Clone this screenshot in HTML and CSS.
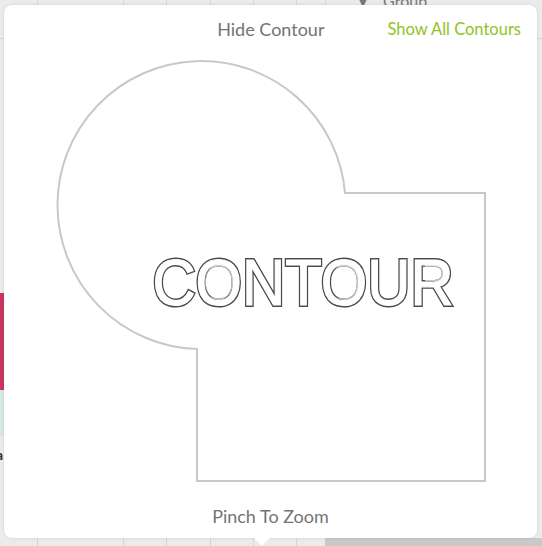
FILE: index.html
```html
<!DOCTYPE html>
<html>
<head>
<meta charset="utf-8">
<link rel="stylesheet" href="styles.css">
</head>
<body>
<div class="backdrop">
  <div class="bg-grid">
    <span class="bg-group">▼&nbsp;&nbsp;&nbsp;Group</span>
    <div class="bg-pink"></div>
    <div class="bg-teal"></div>
    <span class="bg-a">a</span>
    <div class="bg-dark"></div>
  </div>
  <div class="popover">
    <div class="header">
      <span class="hide">Hide Contour</span>
      <span class="show">Show All Contours</span>
    </div>
    <svg class="canvas" width="533" height="533" viewBox="4 5 533 533">
      <path class="shape" d="M345 193 L485 193 L485 481 L197 481 L197 349 A144 144 0 1 1 345 193 Z"/>
      <defs>
        <clipPath id="holes">
          <ellipse cx="219" cy="282" rx="14" ry="18"/>
          <ellipse cx="345" cy="282" rx="14" ry="18"/>
          <rect x="425" y="264" width="19" height="17"/>
        </clipPath>
      </defs>
      <g transform="translate(303 0) scale(0.92 1)">
        <text class="word outer" x="0" y="305" text-anchor="middle">CONTOUR</text>
        <text class="word inner" x="0" y="305" text-anchor="middle">CONTOUR</text>
      </g>
      <g clip-path="url(#holes)">
        <g transform="translate(303 0) scale(0.92 1)">
          <text class="word hole" x="0" y="305" text-anchor="middle">CONTOUR</text>
          <text class="word inner" x="0" y="305" text-anchor="middle">CONTOUR</text>
        </g>
      </g>
    </svg>
    <div class="footer">Pinch To Zoom</div>
    <div class="arrow"></div>
  </div>
</div>
</body>
</html>
```
FILE: styles.css
```css
html, body {
  margin: 0;
  padding: 0;
}
body {
  width: 542px;
  height: 546px;
  overflow: hidden;
  background: #e9e9e9;
  font-family: Lato, "Open Sans", sans-serif;
}
.backdrop {
  position: relative;
  width: 542px;
  height: 546px;
}
.bg-grid {
  position: absolute;
  inset: 0;
  background:
    linear-gradient(#d6d6d6, #d6d6d6) 37px 0 / 1px 100% no-repeat,
    linear-gradient(#d6d6d6, #d6d6d6) 123px 0 / 1px 100% no-repeat,
    linear-gradient(#d6d6d6, #d6d6d6) 166px 0 / 1px 100% no-repeat,
    linear-gradient(#d6d6d6, #d6d6d6) 210px 0 / 1px 100% no-repeat,
    linear-gradient(#d6d6d6, #d6d6d6) 253px 0 / 1px 100% no-repeat,
    linear-gradient(#d6d6d6, #d6d6d6) 296px 0 / 1px 100% no-repeat,
    linear-gradient(#d6d6d6, #d6d6d6) 325px 0 / 1px 100% no-repeat,
    linear-gradient(#d6d6d6, #d6d6d6) 0 38px / 100% 1px no-repeat,
    #ebebeb;
}
.bg-group {
  position: absolute;
  left: 355px;
  top: -9px;
  font-size: 16px;
  color: #777;
}
.bg-pink {
  position: absolute;
  left: 0;
  top: 293px;
  width: 5px;
  height: 97px;
  background: #c8375f;
}
.bg-teal {
  position: absolute;
  left: 0;
  top: 390px;
  width: 5px;
  height: 46px;
  background: #d4e9e6;
}
.bg-a {
  position: absolute;
  left: -4px;
  top: 446px;
  font-size: 14px;
  font-weight: bold;
  color: #333;
}
.bg-dark {
  position: absolute;
  left: 325px;
  top: 538px;
  width: 217px;
  height: 8px;
  background: #c9c9c9;
}
.popover {
  position: absolute;
  left: 4px;
  top: 5px;
  width: 533px;
  height: 533px;
  background: #fff;
  border-radius: 8px;
  box-shadow: 0 0 3px rgba(0,0,0,0.12);
}
.header {
  position: relative;
  z-index: 1;
  display: flex;
  justify-content: flex-end;
  align-items: center;
  gap: 63px;
  height: 48px;
  padding-right: 16px;
}
.hide {
  font-size: 18px;
  color: #747474;
}
.show {
  font-size: 16.5px;
  color: #8fc31f;
}
.canvas {
  position: absolute;
  left: 0;
  top: 0;
}
.shape {
  fill: none;
  stroke: #c8c8c8;
  stroke-width: 2;
}
.word {
  font-family: "Liberation Sans", Arial, sans-serif;
  font-size: 65px;
}
.outer {
  fill: none;
  stroke: #4a4a4a;
  stroke-width: 4;
}
.inner {
  fill: #fff;
  stroke: #fff;
  stroke-width: 1.2;
}
.hole {
  fill: none;
  stroke: #c4c4c4;
  stroke-width: 4;
}
.footer {
  position: absolute;
  left: 0;
  right: 0;
  bottom: 11px;
  text-align: center;
  font-size: 18px;
  color: #747474;
}
.arrow {
  position: absolute;
  left: 250px;
  bottom: -8px;
  width: 0;
  height: 0;
  border-left: 8px solid transparent;
  border-right: 8px solid transparent;
  border-top: 8px solid #fff;
}
```
